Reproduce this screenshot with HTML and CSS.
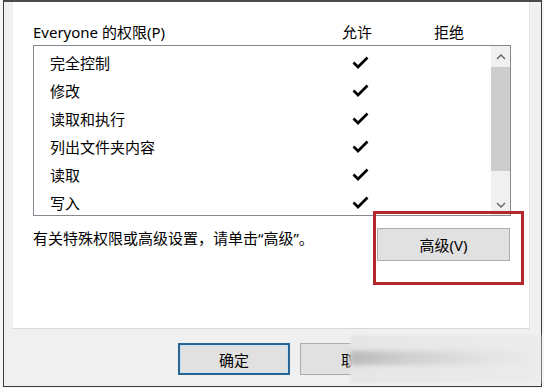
FILE: index.html
```html
<!DOCTYPE html>
<html lang="zh-CN">
<head>
<meta charset="utf-8">
<title>权限</title>
<link rel="stylesheet" href="styles.css">
</head>
<body>
<div class="window">
  <div class="panel">
    <div class="perm-header">
      <span>Everyone 的权限(P)</span>
      <span>允许</span>
      <span>拒绝</span>
    </div>
    <div class="listbox">
      <div class="rows">
        <div class="row"><span>完全控制</span><svg class="check" viewBox="0 0 17 13"><polyline points="1.5,6.5 6,11 15.5,1.5"/></svg></div>
        <div class="row"><span>修改</span><svg class="check" viewBox="0 0 17 13"><polyline points="1.5,6.5 6,11 15.5,1.5"/></svg></div>
        <div class="row"><span>读取和执行</span><svg class="check" viewBox="0 0 17 13"><polyline points="1.5,6.5 6,11 15.5,1.5"/></svg></div>
        <div class="row"><span>列出文件夹内容</span><svg class="check" viewBox="0 0 17 13"><polyline points="1.5,6.5 6,11 15.5,1.5"/></svg></div>
        <div class="row"><span>读取</span><svg class="check" viewBox="0 0 17 13"><polyline points="1.5,6.5 6,11 15.5,1.5"/></svg></div>
        <div class="row"><span>写入</span><svg class="check" viewBox="0 0 17 13"><polyline points="1.5,6.5 6,11 15.5,1.5"/></svg></div>
      </div>
      <div class="scrollbar">
        <div class="sb-btn"><svg viewBox="0 0 10 6"><polyline points="1,5 5,1 9,5"/></svg></div>
        <div class="sb-thumb"></div>
        <div class="sb-track"></div>
        <div class="sb-btn"><svg viewBox="0 0 10 6"><polyline points="1,1 5,5 9,1"/></svg></div>
      </div>
    </div>
    <div class="advanced-row">
      <span class="hint">有关特殊权限或高级设置，请单击“高级”。</span>
      <button class="btn btn-adv">高级(V)</button>
    </div>
  </div>
  <div class="footer">
    <button class="btn btn-ok">确定</button>
    <button class="btn">取消</button>
  </div>
</div>
<div class="annotation"></div>
<div class="watermark"></div>
</body>
</html>
```

FILE: styles.css
```css
html, body {
  margin: 0;
  padding: 0;
}
body {
  width: 544px;
  height: 388px;
  background: #f6f6f6;
  font-family: "Noto Sans", "Noto Sans CJK SC", sans-serif;
  font-size: 15px;
  color: #000;
  overflow: hidden;
  position: relative;
}
.window {
  box-sizing: border-box;
  margin-left: 3px;
  width: 539px;
  height: 387px;
  border: 1px solid #3b3b3b;
  border-top: 2px solid #4a4a4a;
  background: #f0f0f0;
  padding-left: 9px;
  display: flex;
  flex-direction: column;
}
.panel {
  box-sizing: border-box;
  width: 517px;
  height: 327px;
  background: #fff;
  border-bottom: 1px solid #d9d9d9;
  border-right: 1px solid #e3e3e3;
  padding: 20px 18px 0 20px;
}
.perm-header {
  display: grid;
  grid-template-columns: 309px 92px auto;
  height: 20px;
  line-height: 20px;
  white-space: nowrap;
}
.listbox {
  box-sizing: border-box;
  margin-top: 3px;
  height: 171px;
  border: 1px solid #828790;
  display: flex;
  overflow: hidden;
}
.rows {
  flex: 1;
  padding-top: 2px;
  padding-left: 16px;
  overflow: hidden;
}
.row {
  display: grid;
  grid-template-columns: 302px 17px;
  align-items: center;
  height: 28px;
  white-space: nowrap;
}
.check {
  width: 17px;
  height: 13px;
}
.check polyline {
  fill: none;
  stroke: #000;
  stroke-width: 2.7;
}
.scrollbar {
  width: 19px;
  display: flex;
  flex-direction: column;
  background: #f0f0f0;
}
.sb-btn {
  height: 21px;
  display: flex;
  align-items: center;
  justify-content: center;
}
.sb-btn svg {
  width: 10px;
  height: 6px;
}
.sb-btn polyline {
  fill: none;
  stroke: #606060;
  stroke-width: 1.3;
}
.sb-thumb {
  height: 104px;
  background: #cdcdcd;
}
.sb-track {
  flex: 1;
}
.advanced-row {
  margin-top: 12px;
  display: flex;
  justify-content: space-between;
  align-items: flex-start;
}
.hint {
  line-height: 20px;
  white-space: nowrap;
}
.btn {
  box-sizing: border-box;
  font-family: "Noto Sans", "Noto Sans CJK SC", sans-serif;
  font-size: 15px;
  color: #000;
  background: #e1e1e1;
  border: 1px solid #adadad;
  padding: 0;
  margin: 0;
}
.btn-adv {
  width: 133px;
  height: 33px;
  margin-right: 1px;
}
.footer {
  display: flex;
  gap: 10px;
  padding-top: 14px;
  padding-left: 165px;
}
.footer .btn {
  width: 112px;
  height: 32px;
}
.btn-ok {
  border: 2px solid #2a6592;
  box-shadow: inset 0 0 0 1px #c7e2f6;
}
.annotation {
  position: absolute;
  left: 373px;
  top: 211px;
  width: 151px;
  height: 74px;
  box-sizing: border-box;
  border: 3px solid #b3282d;
}
.watermark {
  position: absolute;
  left: 350px;
  top: 335px;
  width: 191px;
  height: 48px;
  background: linear-gradient(90deg, #e6e6e6 0%, #ececec 100%);
  filter: blur(1px);
}
.watermark::after {
  content: "";
  position: absolute;
  left: 0;
  top: 16px;
  width: 186px;
  height: 14px;
  background: linear-gradient(90deg, #b9b9b9 0%, #cfcfcf 30%, #e2e2e2 70%, #ebebeb 100%);
  filter: blur(2px);
}
```
